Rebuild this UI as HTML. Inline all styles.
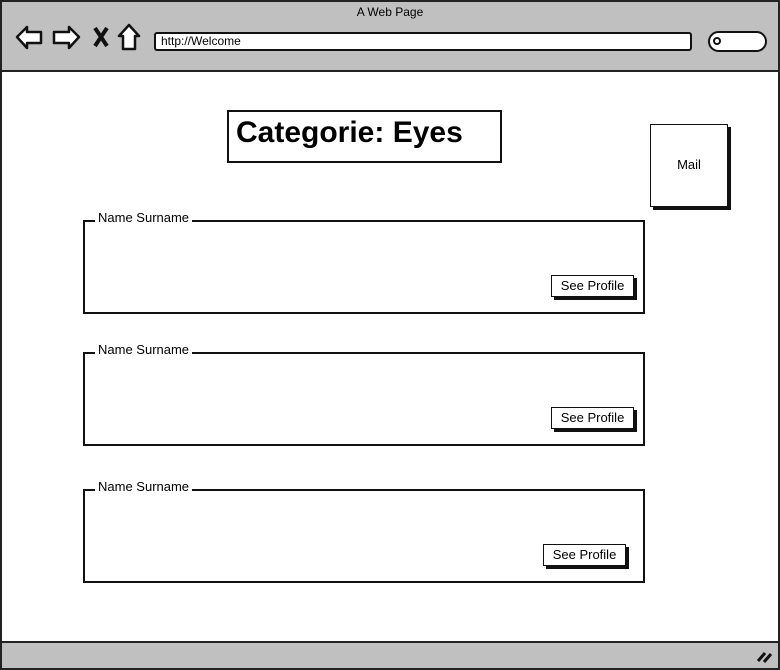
<!DOCTYPE html><html><head><style>
body{margin:0;width:780px;height:670px;position:relative;background:#fff;font-family:"Comic Sans MS","Liberation Sans",sans-serif;overflow:hidden}
.a{position:absolute;box-sizing:border-box}
.panel{border:2px solid #111}
.lbl{font-size:13px;background:#fff;padding:0 3px;line-height:14px}
.btn{border:1.5px solid #111;background:#fff;box-shadow:3px 3px 0 #111;font-size:13px;text-align:center;line-height:19px}
</style></head><body>
<div class="a" style="left:0;top:0;width:780px;height:670px;border:2px solid #222"></div>
<div class="a" style="left:2px;top:2px;width:776px;height:70px;background:#c0c0c0;border-bottom:2px solid #222"></div>
<div class="a" style="left:0;top:5px;width:780px;text-align:center;font-size:12px">A Web Page</div>
<svg class="a" style="left:14px;top:22px" width="130" height="30" viewBox="0 0 130 30">
<g fill="#fff" stroke="#111" stroke-width="2.5" stroke-linejoin="round">
<path d="M3 15 L13 5 L13 10 L27 10 L27 21 L13 21 L13 26 Z"/>
<path d="M65 15 L55 5 L55 10 L40 10 L40 21 L55 21 L55 26 Z"/>
<path d="M115 3 L105 14 L109 14 L109 27 L121 27 L121 14 L125 14 Z"/>
</g>
<path d="M81 6 L93 24 M93 6 L81 24" stroke="#111" stroke-width="4"/>
</svg>
<div class="a" style="left:154px;top:32px;width:538px;height:19px;background:#fff;border:2px solid #111;border-radius:3px;font-size:12px;padding-left:5px;line-height:15px">http://Welcome</div>
<div class="a" style="left:708px;top:31px;width:59px;height:21px;background:#fff;border:2px solid #111;border-radius:11px"></div>
<div class="a" style="left:713px;top:37px;width:8px;height:8px;border:2px solid #111;border-radius:50%"></div>
<div class="a" style="left:2px;top:641px;width:776px;height:27px;background:#c0c0c0;border-top:2px solid #222"></div>
<svg class="a" style="left:755px;top:648px" width="20" height="16"><path d="M3 13 L10 5 M9 14 L16 6" stroke="#111" stroke-width="3"/></svg>
<div class="a" style="left:227px;top:110px;width:275px;height:53px;border:2px solid #111;font-size:30px;font-weight:bold;padding-left:7px;line-height:42px">Categorie: Eyes</div>
<div class="a" style="left:650px;top:124px;width:78px;height:83px;border:1.5px solid #111;box-shadow:3px 3px 0 #111;font-size:13px;text-align:center;line-height:80px">Mail</div>
<div class="a panel" style="left:83px;top:220px;width:562px;height:94px"></div>
<div class="a lbl" style="left:95px;top:211px">Name Surname</div>
<div class="a btn" style="left:551px;top:275px;width:83px;height:22px">See Profile</div>
<div class="a panel" style="left:83px;top:352px;width:562px;height:94px"></div>
<div class="a lbl" style="left:95px;top:343px">Name Surname</div>
<div class="a btn" style="left:551px;top:407px;width:83px;height:22px">See Profile</div>
<div class="a panel" style="left:83px;top:489px;width:562px;height:94px"></div>
<div class="a lbl" style="left:95px;top:480px">Name Surname</div>
<div class="a btn" style="left:543px;top:544px;width:83px;height:22px">See Profile</div>
</body></html>
